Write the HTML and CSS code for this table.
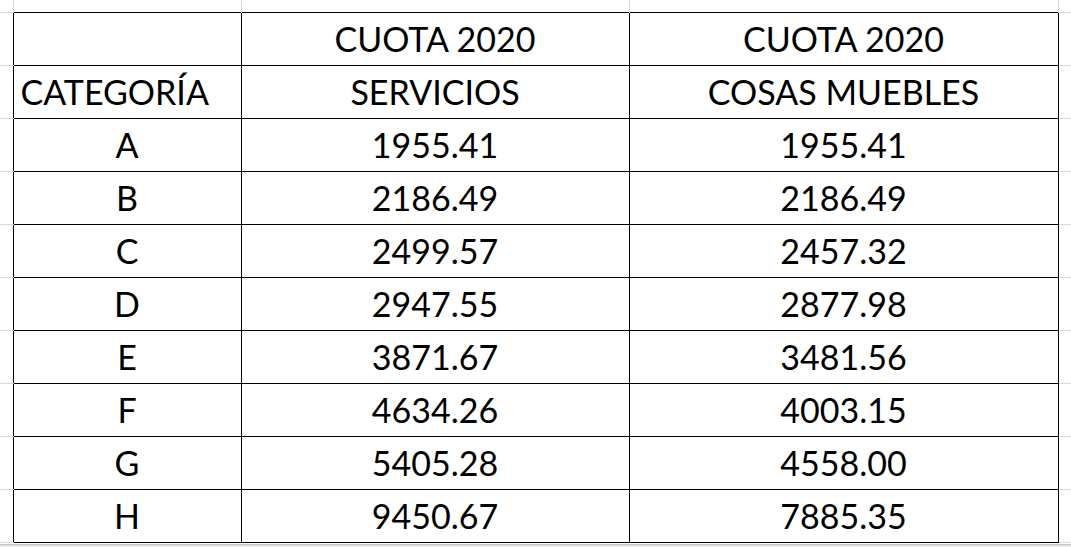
FILE: index.html
```html
<!DOCTYPE html>
<html lang="es">
<head>
<meta charset="utf-8">
<title>Cuotas 2020</title>
<link rel="stylesheet" href="styles.css">
</head>
<body>
<div class="sheet">
<table class="grid">
  <colgroup>
    <col class="c-gut-l">
    <col class="c-cat">
    <col class="c-serv">
    <col class="c-mueb">
    <col class="c-gut-r">
  </colgroup>
  <tr class="r-gut">
    <td class="g-corner"></td><td class="g-top"></td><td class="g-top"></td><td class="g-top"></td><td class="g-corner-r"></td>
  </tr>
  <tr>
    <td class="g-left"></td><td class="cell"></td><td class="cell">CUOTA 2020</td><td class="cell">CUOTA 2020</td><td class="g-right"></td>
  </tr>
  <tr>
    <td class="g-left"></td><td class="cell left">CATEGORÍA</td><td class="cell">SERVICIOS</td><td class="cell">COSAS MUEBLES</td><td class="g-right"></td>
  </tr>
  <tr><td class="g-left"></td><td class="cell">A</td><td class="cell">1955.41</td><td class="cell">1955.41</td><td class="g-right"></td></tr>
  <tr><td class="g-left"></td><td class="cell">B</td><td class="cell">2186.49</td><td class="cell">2186.49</td><td class="g-right"></td></tr>
  <tr><td class="g-left"></td><td class="cell">C</td><td class="cell">2499.57</td><td class="cell">2457.32</td><td class="g-right"></td></tr>
  <tr><td class="g-left"></td><td class="cell">D</td><td class="cell">2947.55</td><td class="cell">2877.98</td><td class="g-right"></td></tr>
  <tr><td class="g-left"></td><td class="cell">E</td><td class="cell">3871.67</td><td class="cell">3481.56</td><td class="g-right"></td></tr>
  <tr><td class="g-left"></td><td class="cell">F</td><td class="cell">4634.26</td><td class="cell">4003.15</td><td class="g-right"></td></tr>
  <tr><td class="g-left"></td><td class="cell">G</td><td class="cell">5405.28</td><td class="cell">4558.00</td><td class="g-right"></td></tr>
  <tr><td class="g-left"></td><td class="cell">H</td><td class="cell">9450.67</td><td class="cell">7885.35</td><td class="g-right"></td></tr>
</table>
<div class="scrollbar"></div>
</div>
</body>
</html>
```

FILE: styles.css
```css
html, body {
  margin: 0;
  padding: 0;
  background: #ffffff;
}

.sheet {
  width: 1071px;
  height: 547px;
  overflow: hidden;
  display: flex;
  flex-direction: column;
}

.grid {
  border-collapse: collapse;
  table-layout: fixed;
  width: 1071px;
  font-family: Lato, "Liberation Sans", sans-serif;
  font-size: 34px;
  color: #000;
}

.c-gut-l { width: 13px; }
.c-cat { width: 228px; }
.c-serv { width: 388px; }
.c-mueb { width: 429px; }
.c-gut-r { width: 13px; }

.r-gut td {
  height: 12px;
  padding: 0;
}

.grid td {
  padding: 0;
}

.g-corner {
  border-right: 1px solid #d9d9d9;
  border-bottom: 1px solid #d9d9d9;
}

.g-corner-r {
  border-left: 1px solid #d9d9d9;
  border-bottom: 1px solid #d9d9d9;
}

.g-top {
  border-left: 1px solid #d9d9d9;
  border-right: 1px solid #d9d9d9;
}

.g-left {
  border-top: 1px solid #d9d9d9;
  border-bottom: 1px solid #d9d9d9;
}

.g-right {
  border-top: 1px solid #d9d9d9;
  border-bottom: 1px solid #d9d9d9;
}

.grid td.cell {
  border: 1px solid #000;
  height: 53px;
  box-sizing: border-box;
  text-align: center;
  vertical-align: bottom;
  line-height: 40px;
  padding: 0 0 6px 0;
  white-space: nowrap;
}

.grid td.cell.left {
  text-align: left;
  padding-left: 7px;
}

.scrollbar {
  margin-top: 1px;
  height: 4px;
  border-top: 1px solid #c8c8c8;
  background: #e6e6e6;
}
```
